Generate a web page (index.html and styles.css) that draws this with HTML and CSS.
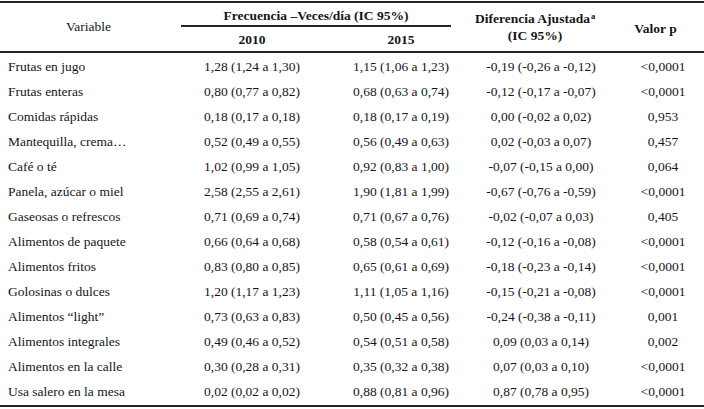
FILE: index.html
```html
<!DOCTYPE html>
<html lang="es">
<head>
<meta charset="utf-8">
<title>Frecuencia de consumo</title>
<link rel="stylesheet" href="styles.css">
</head>
<body>
<table class="data">
  <colgroup>
    <col class="c1"><col class="c2"><col class="c3"><col class="c4"><col class="c5">
  </colgroup>
  <thead>
    <tr class="h1">
      <th rowspan="2" class="var">Variable</th>
      <th colspan="2" class="freq"><div class="freq-title">Frecuencia –Veces/día (IC 95%)</div></th>
      <th rowspan="2" class="dif">Diferencia Ajustada<sup>a</sup><br>(IC 95%)</th>
      <th rowspan="2" class="pval">Valor p</th>
    </tr>
    <tr class="h2">
      <th class="year">2010</th>
      <th class="year">2015</th>
    </tr>
  </thead>
  <tbody>
    <tr><td>Frutas en jugo</td><td>1,28 (1,24 a 1,30)</td><td>1,15 (1,06 a 1,23)</td><td>-0,19 (-0,26 a -0,12)</td><td>&lt;0,0001</td></tr>
    <tr><td>Frutas enteras</td><td>0,80 (0,77 a 0,82)</td><td>0,68 (0,63 a 0,74)</td><td>-0,12 (-0,17 a -0,07)</td><td>&lt;0,0001</td></tr>
    <tr><td>Comidas rápidas</td><td>0,18 (0,17 a 0,18)</td><td>0,18 (0,17 a 0,19)</td><td>0,00 (-0,02 a 0,02)</td><td>0,953</td></tr>
    <tr><td>Mantequilla, crema…</td><td>0,52 (0,49 a 0,55)</td><td>0,56 (0,49 a 0,63)</td><td>0,02 (-0,03 a 0,07)</td><td>0,457</td></tr>
    <tr><td>Café o té</td><td>1,02 (0,99 a 1,05)</td><td>0,92 (0,83 a 1,00)</td><td>-0,07 (-0,15 a 0,00)</td><td>0,064</td></tr>
    <tr><td>Panela, azúcar o miel</td><td>2,58 (2,55 a 2,61)</td><td>1,90 (1,81 a 1,99)</td><td>-0,67 (-0,76 a -0,59)</td><td>&lt;0,0001</td></tr>
    <tr><td>Gaseosas o refrescos</td><td>0,71 (0,69 a 0,74)</td><td>0,71 (0,67 a 0,76)</td><td>-0,02 (-0,07 a 0,03)</td><td>0,405</td></tr>
    <tr><td>Alimentos de paquete</td><td>0,66 (0,64 a 0,68)</td><td>0,58 (0,54 a 0,61)</td><td>-0,12 (-0,16 a -0,08)</td><td>&lt;0,0001</td></tr>
    <tr><td>Alimentos fritos</td><td>0,83 (0,80 a 0,85)</td><td>0,65 (0,61 a 0,69)</td><td>-0,18 (-0,23 a -0,14)</td><td>&lt;0,0001</td></tr>
    <tr><td>Golosinas o dulces</td><td>1,20 (1,17 a 1,23)</td><td>1,11 (1,05 a 1,16)</td><td>-0,15 (-0,21 a -0,08)</td><td>&lt;0,0001</td></tr>
    <tr><td>Alimentos “light”</td><td>0,73 (0,63 a 0,83)</td><td>0,50 (0,45 a 0,56)</td><td>-0,24 (-0,38 a -0,11)</td><td>0,001</td></tr>
    <tr><td>Alimentos integrales</td><td>0,49 (0,46 a 0,52)</td><td>0,54 (0,51 a 0,58)</td><td>0,09 (0,03 a 0,14)</td><td>0,002</td></tr>
    <tr><td>Alimentos en la calle</td><td>0,30 (0,28 a 0,31)</td><td>0,35 (0,32 a 0,38)</td><td>0,07 (0,03 a 0,10)</td><td>&lt;0,0001</td></tr>
    <tr class="last"><td>Usa salero en la mesa</td><td>0,02 (0,02 a 0,02)</td><td>0,88 (0,81 a 0,96)</td><td>0,87 (0,78 a 0,95)</td><td>&lt;0,0001</td></tr>
  </tbody>
</table>
</body>
</html>
```

FILE: styles.css
```css
html, body {
  margin: 0;
  padding: 0;
  background: #ffffff;
}

body {
  padding-top: 1px;
  font-family: "Liberation Serif", "Times New Roman", serif;
  font-size: 13.5px;
  color: #161616;
}

.data {
  width: 704px;
  border-collapse: collapse;
  table-layout: fixed;
  border-top: 2px solid #262626;
  border-bottom: 2px solid #262626;
}

.c1 { width: 177px; }
.c2 { width: 150px; }
.c3 { width: 148px; }
.c4 { width: 132px; }
.c5 { width: 97px; }

th, td {
  padding: 0;
  text-align: center;
  white-space: nowrap;
}

thead th {
  font-weight: bold;
  vertical-align: middle;
}

thead {
  border-bottom: 2px solid #262626;
}

th.var {
  font-weight: normal;
}

th.freq {
  height: 24px;
  vertical-align: top;
}

.freq-title {
  margin: 0 24px 0 4px;
  padding-top: 3px;
  line-height: 19px;
  border-bottom: 2px solid #262626;
}

.h2 th.year {
  height: 23px;
  line-height: 23px;
  vertical-align: top;
  padding-top: 1px;
}

th.dif {
  line-height: 17px;
  padding-right: 12px;
}

th.pval {
  padding-top: 4px;
}

tbody td {
  height: 25px;
  line-height: 25px;
}

tbody td:first-child {
  text-align: left;
  padding-left: 8px;
}

tbody td:last-child {
  padding-left: 15px;
}

tbody tr:first-child td {
  padding-top: 1px;
}

tbody tr.last td {
  height: 26px;
  vertical-align: top;
}

sup {
  font-size: 8.5px;
  font-weight: bold;
  line-height: 0;
  vertical-align: 4px;
  margin-left: 1px;
}
```
